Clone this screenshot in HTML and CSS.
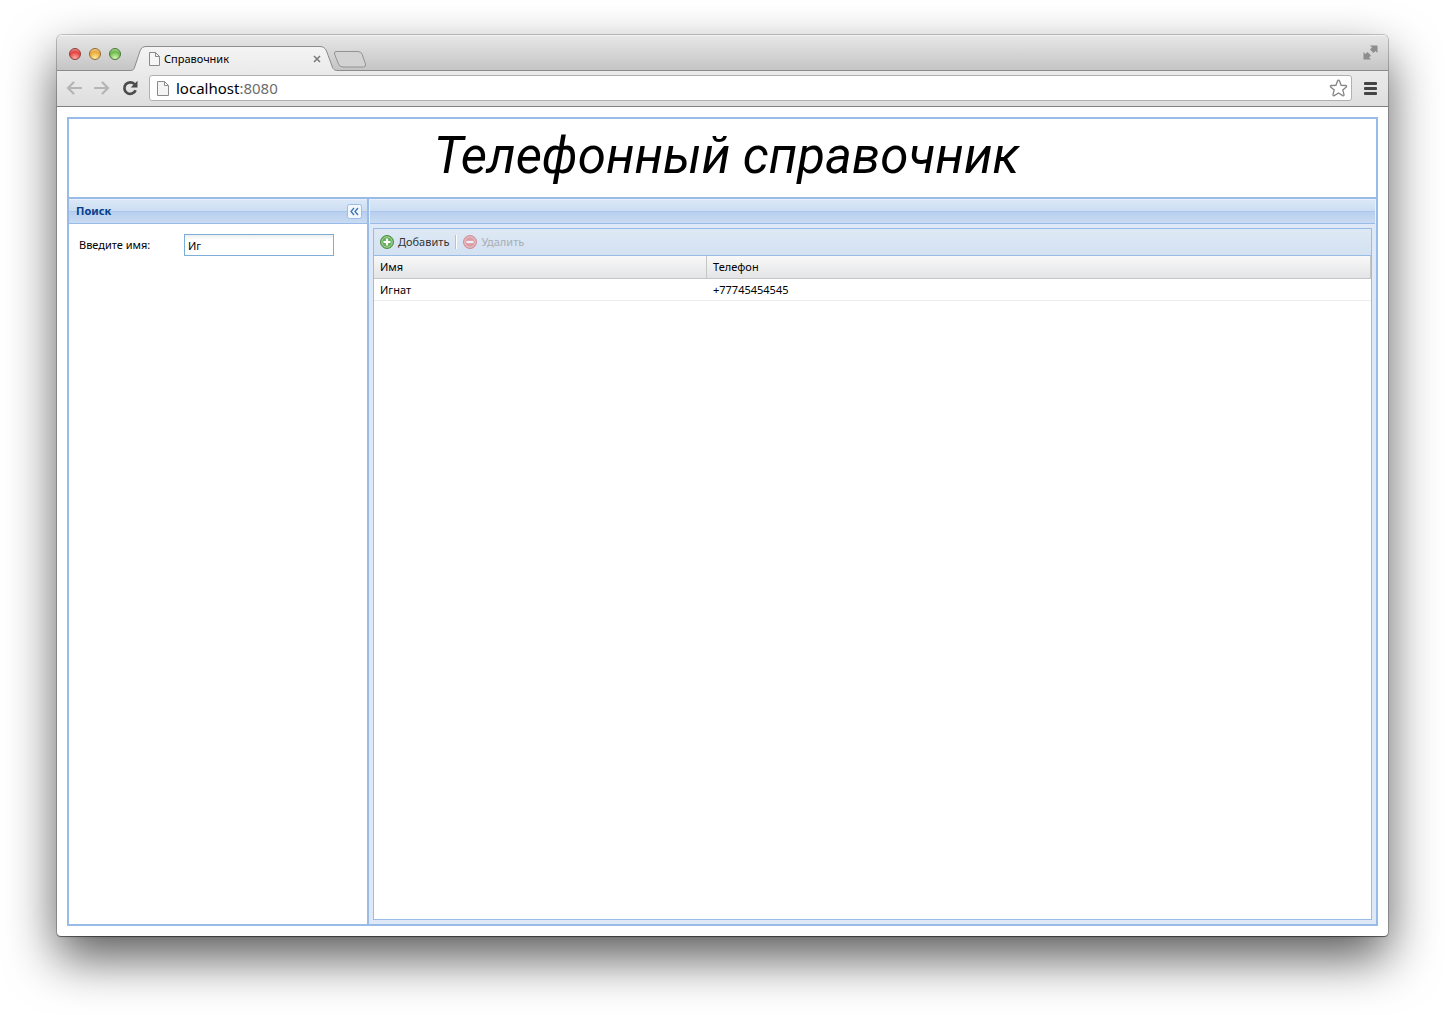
FILE: index.html
```html
<!DOCTYPE html>
<html lang="ru">
<head>
<meta charset="utf-8">
<title>Справочник</title>
<link rel="stylesheet" href="styles.css">
</head>
<body>
<div class="window">
  <div class="titlebar">
    <div class="lights">
      <button class="light light-red" aria-label="Закрыть"></button>
      <button class="light light-yellow" aria-label="Свернуть"></button>
      <button class="light light-green" aria-label="Развернуть"></button>
    </div>
    <div class="tab">
      <svg class="tab-shape" width="208" height="25" viewBox="0 0 208 25">
        <defs><linearGradient id="tabFill" x1="0" y1="0" x2="0" y2="1"><stop offset="0" stop-color="#f4f4f4"/><stop offset="1" stop-color="#ebebeb"/></linearGradient></defs>
        <path d="M0 25V24.500C4 24.500 4 23 5 20L10 5Q11.500 .5 16 .5H190Q194.500 .5 196.500 5L202 20C203 23 204 24.500 208 24.500V25Z" fill="url(#tabFill)"/>
        <path d="M0 24.500C4 24.500 4 23 5 20L10 5Q11.500 .5 16 .5H190Q194.500 .5 196.500 5L202 20C203 23 204 24.500 208 24.500" fill="none" stroke="#8c8c8c"/>
      </svg>
      <svg class="page-icon" width="11" height="14" viewBox="0 0 11 14"><path d="M.5 .5H6.500L10.500 4.500V13.500H.5ZM6.500 .5V4.500H10.500" fill="#f6f6f6" stroke="#8a8a8a"/></svg>
      <span class="tab-title">Справочник</span>
      <button class="tab-close" aria-label="Закрыть вкладку"><svg width="8" height="8" viewBox="0 0 8 8"><path d="M1 1L7 7M7 1L1 7" stroke="#7b7b7b" stroke-width="1.600"/></svg></button>
    </div>
    <button class="new-tab" aria-label="Новая вкладка"><svg width="34" height="17" viewBox="0 0 34 17"><path d="M3 .5H25Q28 .5 29 3L32.500 13Q33 16 30.500 16H10Q6.500 16 5.500 13L1.500 3Q1 .5 3 .5Z" fill="#d3d3d3" stroke="#939393"/></svg></button>
    <button class="fullscreen" aria-label="Во весь экран"><svg width="15" height="15" viewBox="0 0 15 15"><path d="M7 .5H14.500V8L12.500 6L10.500 8L7 4.500L9 2.500ZM.5 7L2.500 9L4.500 7L8 10.500L6 12.500L8 14.500H.5Z" fill="#8d8d8d"/></svg></button>
  </div>
  <div class="toolbar">
    <button class="nav" aria-label="Назад"><svg width="16" height="14" viewBox="0 0 16 14"><path d="M7.500 1.500L2 7L7.500 12.500M2 7H15" fill="none" stroke="#b5b5b5" stroke-width="2.200" stroke-linecap="round"/></svg></button>
    <button class="nav" aria-label="Вперёд"><svg width="16" height="14" viewBox="0 0 16 14"><path d="M8.500 1.500L14 7L8.500 12.500M14 7H1" fill="none" stroke="#b5b5b5" stroke-width="2.200" stroke-linecap="round"/></svg></button>
    <button class="nav" aria-label="Обновить"><svg width="16" height="16" viewBox="0 0 16 16"><path d="M12.500 4.200A5.800 5.800 0 1 0 13.600 10.200" fill="none" stroke="#4b4b4b" stroke-width="2.700"/><path d="M15.500 .8V7.500H8.700Z" fill="#4b4b4b"/></svg></button>
    <div class="address">
      <svg class="page-icon" width="12" height="15" viewBox="0 0 12 15"><path d="M.5 .5H7.500L11.500 4.500V14.500H.5ZM7.500 .5V4.500H11.500" fill="#f4f4f4" stroke="#8a8a8a"/></svg>
      <span class="url">localhost<span class="port">:8080</span></span>
      <button class="star" aria-label="В закладки"><svg width="19" height="18" viewBox="0 0 19 18"><path d="M9.500 1.200Q10.200 1.200 10.500 2L12.100 6.300L16.800 6.500Q18.300 6.900 17.300 8L13.800 11L15 15.500Q15.200 17.200 13.700 16.600L9.500 14L5.300 16.600Q3.800 17.200 4 15.500L5.200 11L1.700 8Q.7 6.900 2.200 6.500L6.900 6.300L8.500 2Q8.800 1.200 9.500 1.200Z" fill="#fff" stroke="#858585" stroke-width="1.300"/></svg></button>
    </div>
    <button class="menu" aria-label="Меню"><svg width="13" height="13" viewBox="0 0 13 13"><path d="M1 1.500H12M1 6.500H12M1 11.500H12" stroke="#444" stroke-width="2.800" stroke-linecap="round"/></svg></button>
  </div>
  <div class="page">
    <div class="viewport">
      <header class="north"><h1>Телефонный справочник</h1></header>
      <div class="columns">
        <aside class="west">
          <div class="panel-header">
            <h2>Поиск</h2>
            <button class="collapse" aria-label="Свернуть панель"><svg width="15" height="15" viewBox="0 0 15 15"><rect x=".5" y=".5" width="14" height="14" rx="2" fill="#f3f8fe" stroke="#9bbce6"/><path d="M7 4L4 7.500L7 11M11 4L8 7.500L11 11" fill="none" stroke="#3f78b3" stroke-width="1.400"/></svg></button>
          </div>
          <form class="search">
            <label for="name">Введите имя:</label>
            <input id="name" type="text" value="Иг">
          </form>
        </aside>
        <main class="center">
          <div class="panel-header"></div>
          <div class="center-body">
            <section class="grid">
              <div class="grid-toolbar">
                <button class="action"><svg width="14" height="14" viewBox="0 0 14 14"><circle cx="7" cy="7" r="6.500" fill="#68ad5b" stroke="#4e9146"/><circle cx="7" cy="7" r="5.200" fill="none" stroke="#a5d29b"/><path d="M7 3.500V10.500M3.500 7H10.500" stroke="#fff" stroke-width="2.200"/></svg>Добавить</button>
                <span class="separator"></span>
                <button class="action" disabled><svg width="14" height="14" viewBox="0 0 14 14"><circle cx="7" cy="7" r="6.500" fill="#e1575a" stroke="#c53f43"/><circle cx="7" cy="7" r="5.200" fill="none" stroke="#f2a5a5"/><path d="M3.500 7H10.500" stroke="#fff" stroke-width="2.200"/></svg>Удалить</button>
              </div>
              <table>
                <thead><tr><th class="col-name">Имя</th><th>Телефон</th></tr></thead>
                <tbody><tr><td>Игнат</td><td>+77745454545</td></tr></tbody>
              </table>
            </section>
          </div>
        </main>
      </div>
    </div>
  </div>
</div>
</body>
</html>
```
FILE: styles.css
```css
* { box-sizing: border-box; }

body {
  margin: 0;
  min-height: 100vh;
  padding: 35px 57px 79px 57px;
  display: flex;
  background: #fff;
  color: #000;
  font: 11px/14px "Noto Sans", "Open Sans", sans-serif;
}

button {
  border: 0;
  padding: 0;
  background: none;
  font: inherit;
  color: inherit;
}

svg { display: block; flex: none; }

.window {
  flex: 1;
  display: flex;
  flex-direction: column;
  min-width: 0;
  background: #fff;
  border-radius: 5px 5px 4px 4px;
  overflow: hidden;
  box-shadow: 0 0 0 1px rgba(0, 0, 0, .2), 0 1px 1px rgba(0, 0, 0, .4), 0 22px 50px rgba(0, 0, 0, .65);
}

/* Browser chrome */
.titlebar {
  height: 36px;
  display: flex;
  align-items: flex-end;
  padding-right: 10px;
  background: linear-gradient(#e6e6e6, #c4c4c4);
  border-top: 1px solid #f3f3f3;
  box-shadow: inset 0 -1px #8c8c8c;
}

.lights {
  display: flex;
  gap: 8px;
  padding: 0 12px 11px;
}

.light {
  width: 12px;
  height: 12px;
  border-radius: 50%;
  border: 1px solid;
}

.light-red { background: radial-gradient(circle at 50% 90%, #ffb0a8, #e3403e 60%, #f3b1ac); border-color: #8f3c3a; }
.light-yellow { background: radial-gradient(circle at 50% 90%, #fff09a, #e8a83a 60%, #f7dca0); border-color: #8f6a34; }
.light-green { background: radial-gradient(circle at 50% 90%, #d8fab0, #6bb84b 60%, #c2e4ae); border-color: #4a743c; }

.tab {
  position: relative;
  width: 208px;
  height: 25px;
  margin-left: -3px;
  padding: 1px 17px 0 19px;
  display: flex;
  align-items: center;
}

.tab-shape {
  position: absolute;
  inset: 0;
}

.tab > .page-icon,
.tab-title,
.tab-close { position: relative; }

.tab-title {
  flex: 1;
  padding-left: 4px;
  font-size: 11px;
}

.new-tab {
  margin: 0 0 3px -5px;
}

.fullscreen { margin: 0 0 11px auto; }

.toolbar {
  height: 36px;
  display: flex;
  align-items: center;
  gap: 12px;
  padding: 0 11px 1px 9px;
  background: linear-gradient(#ebebeb, #dedede);
  border-bottom: 1px solid #808080;
}

.address {
  flex: 1;
  height: 26px;
  margin-left: -1px;
  display: flex;
  align-items: center;
  padding: 0 3px 0 7px;
  background: #fff;
  border: 1px solid #b0b0b0;
  border-radius: 3px;
}

.url {
  flex: 1;
  padding-left: 7px;
  font-size: 15px;
  line-height: 20px;
}

.port { color: #6d6d6d; }

/* Page */
.page {
  flex: 1;
  display: flex;
  padding: 10px;
}

.viewport {
  flex: 1;
  display: flex;
  flex-direction: column;
  border: 2px solid #99bbe8;
}

.north {
  height: 80px;
  padding: 6px 0 0 8px;
  border-bottom: 2px solid #99bbe8;
}

h1 {
  margin: 0;
  text-align: center;
  font: italic 400 51px/62px Roboto, sans-serif;
}

.columns {
  flex: 1;
  display: flex;
}

.west {
  width: 300px;
  border-right: 2px solid #99bbe8;
}

.panel-header {
  height: 25px;
  display: flex;
  align-items: center;
  justify-content: space-between;
  padding: 0 5px 2px 7px;
  border: 1px solid #e8f0fa;
  border-width: 1px 0 0 1px;
  background: linear-gradient(#dae7f6, #cddef3 45%, #abc7ec 46%, #abc7ec 50%, #b8cfee 51%, #cbddf3);
  box-shadow: inset 0 -1px #99bbe8;
}

.west .panel-header { border-left: 0; }
.center .panel-header { border-right-width: 1px; }

h2 {
  margin: 0;
  font-size: 11px;
  line-height: 14px;
  color: #04408c;
}

.search {
  display: flex;
  align-items: center;
  padding: 10px;
}

.search label { width: 105px; }

.search input {
  width: 150px;
  height: 22px;
  padding: 0 3px;
  border: 1px solid #7eadd9;
  background: linear-gradient(#eee, #fff 5px);
  font: inherit;
  outline: 0;
}

.center {
  flex: 1;
  display: flex;
  flex-direction: column;
  background: #dfe8f6;
}

.center-body {
  flex: 1;
  display: flex;
  padding: 4px;
}

.grid {
  flex: 1;
  background: #fff;
  border: 1px solid #99bbe8;
}

.grid-toolbar {
  height: 27px;
  display: flex;
  align-items: center;
  padding: 0 6px;
  background: linear-gradient(#dfe9f5, #d3e1f1);
  border-bottom: 1px solid #99bbe8;
}

.action {
  display: flex;
  align-items: center;
  gap: 4px;
  color: #333;
}

.action:disabled {
  color: #777;
  opacity: .5;
}

.separator {
  width: 2px;
  height: 14px;
  margin: 0 6px;
  background: #98c8ff;
  border-right: 1px solid #fff;
}

table {
  width: 100%;
  table-layout: fixed;
  border-collapse: separate;
  border-spacing: 0;
}

.col-name { width: 33.4%; }

th {
  height: 23px;
  padding: 0 6px;
  text-align: left;
  font-weight: 400;
  background: linear-gradient(#f9f9f9, #e3e4e6);
  border: solid #c5c5c5;
  border-width: 0 1px 1px 0;
}

td {
  height: 22px;
  padding: 0 6px;
  border-bottom: 1px solid #ededed;
}
```
